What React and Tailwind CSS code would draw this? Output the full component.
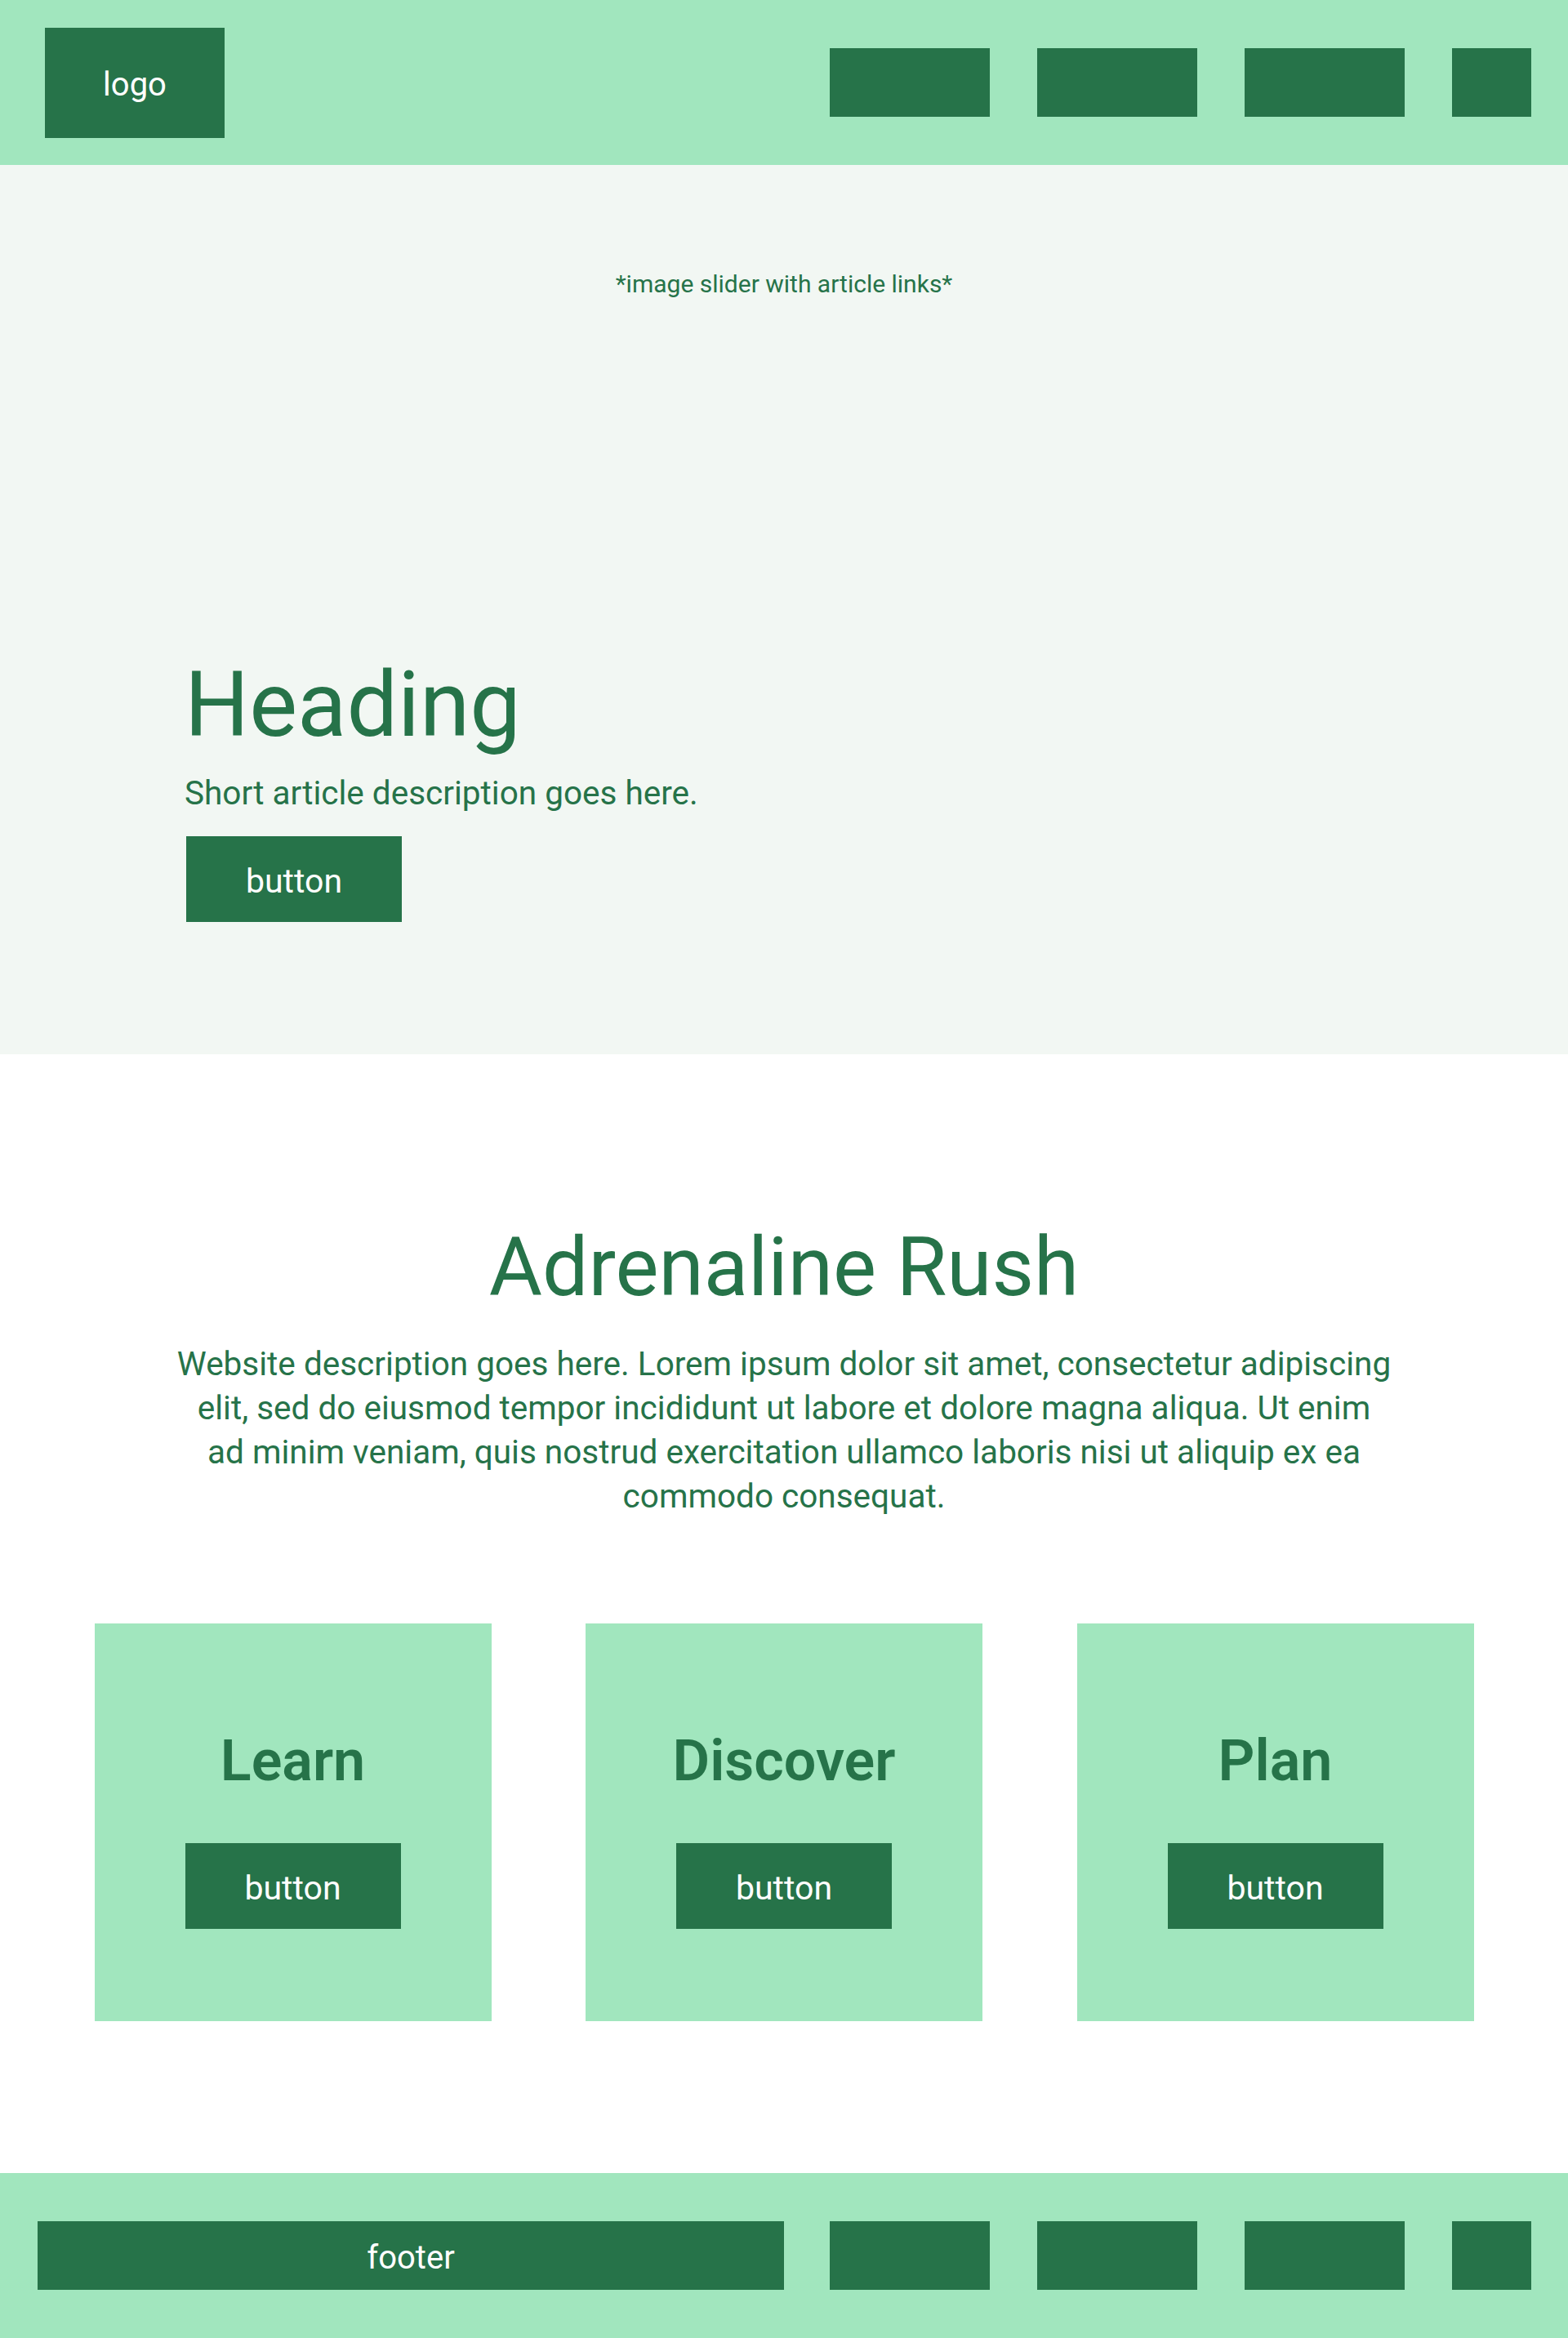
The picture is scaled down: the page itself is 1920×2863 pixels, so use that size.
import React from "react";

const navItems = ["w-[196px]", "w-[196px]", "w-[196px]", "w-[97px]"];

function NavBoxes() {
  return (
    <div className="flex items-center gap-[58px]">
      {navItems.map((w, i) => (
        <div key={i} className={`${w} h-[84px] bg-[#267349]`} />
      ))}
    </div>
  );
}

function Button() {
  return (
    <button
      type="button"
      className="w-[264px] h-[105px] bg-[#267349] text-white text-[41px] leading-none pt-[6px] flex items-center justify-center"
    >
      button
    </button>
  );
}

const cards = ["Learn", "Discover", "Plan"];

export default function App() {
  return (
    <div className="font-[family-name:Roboto,'Open_Sans',sans-serif] text-[#267349]">
      {/* header */}
      <header className="h-[202px] bg-[#a1e6be] flex items-center justify-between pl-[55px] pr-[45px]">
        <div className="w-[220px] h-[135px] bg-[#267349] text-white text-[40px] leading-none pt-[6px] flex items-center justify-center">
          logo
        </div>
        <NavBoxes />
      </header>

      {/* hero / slider */}
      <section className="bg-[#f2f7f3] pt-[126px] pb-[162px]">
        <p className="text-center text-[30px] leading-[40px]">*image slider with article links*</p>
        <div className="mt-[440px] pl-[226px]">
          <h1 className="text-[111px] leading-[110px]">Heading</h1>
          <p className="mt-[29px] text-[40.5px] leading-[48px]">Short article description goes here.</p>
          <div className="mt-[29px] ml-[2px]">
            <Button />
          </div>
        </div>
      </section>

      {/* intro */}
      <section className="bg-white pt-[211px] pb-[186px]">
        <h2 className="text-center text-[100px] leading-none">Adrenaline Rush</h2>
        <p className="mt-[41px] mx-auto max-w-[1540px] text-center text-[40.5px] leading-[54px]">
          Website description goes here. Lorem ipsum dolor sit amet, consectetur adipiscing
          <br />
          elit, sed do eiusmod tempor incididunt ut labore et dolore magna aliqua. Ut enim
          <br />
          ad minim veniam, quis nostrud exercitation ullamco laboris nisi ut aliquip ex ea
          <br />
          commodo consequat.
        </p>
        <div className="mt-[129px] flex justify-evenly">
          {cards.map((c) => (
            <div key={c} className="w-[486px] h-[487px] bg-[#a1e6be] flex flex-col items-center pt-[133px]">
              <h3 className="text-[70px] leading-none font-semibold">{c}</h3>
              <div className="mt-[66px]">
                <Button />
              </div>
            </div>
          ))}
        </div>
      </section>

      {/* footer */}
      <footer className="h-[202px] bg-[#a1e6be] flex items-center justify-between pl-[46px] pr-[45px]">
        <div className="w-[914px] h-[84px] bg-[#267349] text-white text-[40px] leading-none pt-[6px] flex items-center justify-center">
          footer
        </div>
        <NavBoxes />
      </footer>
    </div>
  );
}
